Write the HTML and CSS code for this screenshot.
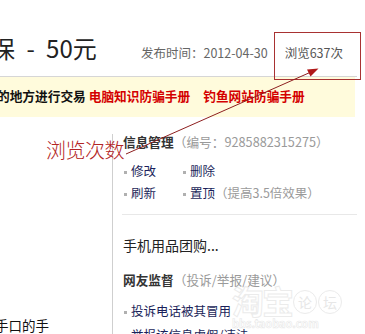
FILE: index.html
```html
<!DOCTYPE html>
<html lang="zh-CN">
<head>
<meta charset="utf-8">
<title>信息详情</title>
<link rel="stylesheet" href="styles.css">
</head>
<body>
<div class="page">
  <header class="head">
    <h1 class="title">担保 - 50元</h1>
    <div class="meta">
      <span>发布时间：2012-04-30</span>
      <span class="views">浏览637次</span>
    </div>
  </header>
  <div class="notice">的地方进行交易 <a class="warn">电脑知识防骗手册</a><a class="warn gap">钓鱼网站防骗手册</a></div>
  <div class="main">
    <div class="left">
      <p class="lefttext">手口的手</p>
    </div>
    <aside class="side">
      <h3 class="sub">信息管理<span class="note">（编号：9285882315275）</span></h3>
      <ul class="ops">
        <li>修改</li>
        <li>删除</li>
        <li>刷新</li>
        <li>置顶<span class="note">（提高3.5倍效果）</span></li>
      </ul>
      <div class="sep"></div>
      <p class="buy">手机用品团购...</p>
      <h3 class="sub sub2">网友监督<span class="note">（投诉/举报/建议）</span></h3>
      <ul class="reports">
        <li>投诉电话被其冒用</li>
        <li>举报该信息虚假/违法</li>
      </ul>
    </aside>
  </div>

  <div class="annot-box"></div>
  <div class="annot-label">浏览次数</div>
  <svg class="annot-arrow" width="365" height="334" viewBox="0 0 365 334">
    <line x1="126" y1="154" x2="311" y2="72" stroke="#8e1f1f" stroke-width="1"/>
    <polygon points="307,69.5 318.5,68.5 310.5,76.5" fill="#b01818"/>
  </svg>
  <div class="watermark">
    <span class="wm-big">淘宝</span><span class="wm-ring">论</span><span class="wm-ring">坛</span>
    <div class="wm-url">bbs.taobao.com</div>
  </div>
</div>
</body>
</html>
```

FILE: styles.css
```css
html, body {
  margin: 0;
  padding: 0;
  background: #fff;
}
body {
  width: 365px;
  height: 334px;
  overflow: hidden;
  font-family: "Noto Sans CJK SC", "Noto Sans", sans-serif;
  color: #333;
}
.page {
  position: relative;
  width: 357px;
}
.head {
  display: flex;
  align-items: flex-start;
  height: 77px;
  box-sizing: border-box;
  border-bottom: 1px solid #d6d6d6;
}
.title {
  margin: 34px 0 0 -33px;
  font-size: 24px;
  line-height: 28px;
  font-weight: normal;
  color: #222;
  white-space: nowrap;
  word-spacing: 6px;
}
.meta {
  margin: 45px 14px 0 auto;
  display: flex;
  gap: 17px;
  font-size: 12.5px;
  line-height: 16px;
  color: #666;
  white-space: nowrap;
}
.views {
  color: #555;
}
.notice {
  width: 355px;
  height: 40px;
  background: #fffbdc;
  font-size: 12.7px;
  font-weight: bold;
  line-height: 38px;
  color: #111;
  white-space: nowrap;
  overflow: hidden;
  text-indent: -3px;
}
.warn {
  color: #d40000;
}
.gap {
  margin-left: 13px;
}
.main {
  display: grid;
  grid-template-columns: 112px 1fr;
}
.left {
  overflow: hidden;
}
.lefttext {
  margin: 0 0 0 -5px;
  padding-top: 198px;
  font-size: 13.5px;
  line-height: 20px;
  color: #111;
  white-space: nowrap;
}
.side {
  margin-top: 17px;
  border-left: 1px solid #cfcfcf;
  padding-left: 10px;
  height: 220px;
}
.sub {
  margin: 0;
  font-size: 12.7px;
  line-height: 16px;
  font-weight: bold;
  color: #333;
  white-space: nowrap;
}
.note {
  font-weight: normal;
  color: #9a9a9a;
}
.ops, .reports {
  list-style: none;
  margin: 10px 0;
  padding: 0;
  font-size: 12.5px;
  line-height: 22px;
  color: #1b1f5a;
  white-space: nowrap;
}
.reports {
  margin-top: 11px;
  line-height: 24px;
}
.ops {
  display: grid;
  grid-template-columns: 59px auto;
}
.ops li::before, .reports li::before {
  content: "";
  display: inline-block;
  width: 3px;
  height: 3px;
  background: #b0b0b0;
  margin: 0 4px 0 1px;
  vertical-align: middle;
}
.sep {
  border-top: 1px solid #e8e8e8;
  margin-left: -1px;
}
.buy {
  margin: 20px 0 0;
  font-size: 14px;
  line-height: 20px;
  color: #222;
}
.sub2 {
  margin-top: 17px;
}
.annot-box {
  position: absolute;
  left: 274px;
  top: 32px;
  width: 85px;
  height: 46px;
  border: 1px solid #a83232;
}
.annot-label {
  position: absolute;
  left: 46px;
  top: 138px;
  font-size: 20px;
  line-height: 24px;
  font-weight: 300;
  color: #b32424;
  letter-spacing: -0.5px;
  white-space: nowrap;
}
.annot-arrow {
  position: absolute;
  left: 0;
  top: 0;
  pointer-events: none;
}
.watermark {
  position: absolute;
  left: 232px;
  top: 282px;
  color: rgba(255,255,255,0.6);
  opacity: 0.35;
  pointer-events: none;
}
.wm-big {
  font-size: 32px;
  line-height: 36px;
  font-weight: bold;
  -webkit-text-stroke: 1px #c8c8c8;
  letter-spacing: -2px;
}
.wm-ring {
  display: inline-block;
  width: 22px;
  height: 22px;
  border: 1px solid #c8c8c8;
  border-radius: 50%;
  font-size: 14px;
  line-height: 22px;
  text-align: center;
  color: #bbb;
  vertical-align: 6px;
  margin-left: 1px;
}
.wm-url {
  font-size: 11px;
  line-height: 12px;
  font-weight: bold;
  color: #fff;
  -webkit-text-stroke: 0.6px #bcbcbc;
  margin-top: -2px;
}
```
